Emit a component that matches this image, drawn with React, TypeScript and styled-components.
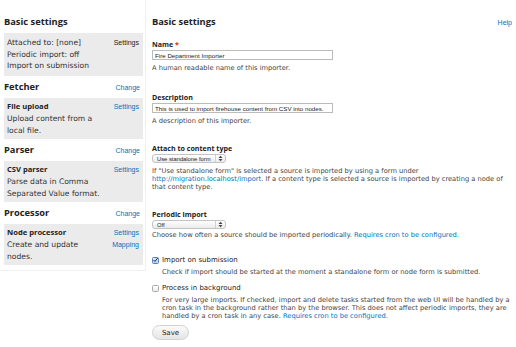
import React from "react";
import styled, { createGlobalStyle } from "styled-components";

const Global = createGlobalStyle`
  html, body { margin: 0; padding: 0; background: #fff; }
  body { font-family: "DejaVu Sans", Verdana, sans-serif; color: #333; }
  * { box-sizing: border-box; }
`;

const Page = styled.div`
  display: flex;
  width: 516px;
  height: 347px;
  overflow: hidden;
`;

const Sidebar = styled.div`
  width: 146px;
  flex: none;
  align-self: flex-start;
  padding: 11px 2px 5px 4px;
  border-right: 1px solid #f0f0f0;
  border-bottom: 1px solid #f0f0f0;
`;

const SideHead = styled.div`
  display: flex;
  justify-content: space-between;
  align-items: center;
  height: 22px;
  padding-right: 3px;
`;

const Title = styled.h2`
  margin: 0;
  font-family: "Open Sans", "DejaVu Sans", sans-serif;
  font-size: 9.3px;
  line-height: 12px;
  font-weight: bold;
  color: #222;
`;

const Link = styled.a`
  color: #0074bd;
  text-decoration: none;
  font-family: "Liberation Sans", Arial, sans-serif;
  font-size: 7px;
`;

const Box = styled.div<{ pad?: number }>`
  background: #ebebeb;
  display: flex;
  justify-content: space-between;
  padding: ${(p) => p.pad ?? 3}px 4px ${(p) => p.pad ?? 3}px 3px;
`;

const BoxText = styled.div`
  font-size: 7.6px;
  line-height: 11.7px;
  color: #333;
  white-space: nowrap;
`;

const BoxTitle = styled.div`
  font-family: "Open Sans", "DejaVu Sans", sans-serif;
  font-weight: bold;
  font-size: 7.6px;
  color: #222;
`;

const BoxLinks = styled.div`
  display: flex;
  flex-direction: column;
  align-items: flex-end;
  line-height: 11.7px;
`;

const PlainAction = styled.span`
  font-family: "Liberation Sans", Arial, sans-serif;
  font-size: 7px;
  color: #222;
`;

const Main = styled.div`
  flex: 1;
  padding: 12px 4px 0 6px;
`;

const MainHead = styled.div`
  display: flex;
  justify-content: space-between;
  align-items: center;
  height: 20px;
`;

const Field = styled.div<{ gap: number }>`
  margin-top: ${(p) => p.gap}px;
`;

const Label = styled.label`
  display: block;
  font-family: "Open Sans", "DejaVu Sans", sans-serif;
  font-size: 7.1px;
  line-height: 8px;
  font-weight: bold;
  color: #222;
  margin-bottom: 2px;
`;

const Req = styled.span`
  color: #e32700;
`;

const TextInput = styled.input`
  display: block;
  width: 181px;
  height: 10px;
  padding: 0 2px;
  margin: 0;
  border: 1px solid #bcbcbc;
  font-family: "Liberation Sans", Arial, sans-serif;
  font-size: 6.2px;
  color: #222;
  outline: none;
`;

const Select = styled.div`
  display: flex;
  align-items: center;
  justify-content: space-between;
  width: 74px;
  height: 9px;
  margin-top: 1px;
  border: 1px solid #c4c4c4;
  border-radius: 3px;
  padding: 0 0 0 4px;
  font-family: "Liberation Sans", Arial, sans-serif;
  font-size: 5.8px;
  color: #222;
  background: linear-gradient(#ffffff, #ebebeb);
`;

const SelArrows = styled.span`
  display: flex;
  align-items: center;
  justify-content: center;
  width: 10px;
  height: 100%;
  border-left: 1px solid #d0d0d0;
`;

const Desc = styled.div<{ mt?: number }>`
  font-size: 6.7px;
  line-height: 8px;
  color: #444;
  margin-top: ${(p) => p.mt ?? 4}px;
  white-space: nowrap;
`;

const InlineLink = styled.a`
  color: #0074bd;
  text-decoration: none;
`;

const CheckRow = styled.label`
  display: flex;
  align-items: center;
  gap: 3px;
  height: 8px;
  font-size: 7px;
  color: #222;
`;

const Check = styled.span<{ on?: boolean }>`
  width: 7px;
  height: 7px;
  flex: none;
  border: 1px solid ${(p) => (p.on ? "#5b7fb4" : "#a8a8a8")};
  border-radius: 1.5px;
  background: ${(p) => (p.on ? "linear-gradient(#e4eefa, #b9cde9)" : "linear-gradient(#fff, #ececec)")};
  display: flex;
  align-items: center;
  justify-content: center;
`;

const Indented = styled.div`
  padding-left: 10px;
`;

const SaveButton = styled.button`
  display: flex;
  align-items: center;
  justify-content: center;
  margin-top: 5px;
  width: 37px;
  height: 15px;
  border: 1px solid #d2d2d2;
  border-radius: 8px;
  background: linear-gradient(#fbfbfb, #e4e4e4);
  font-family: "DejaVu Sans", Verdana, sans-serif;
  font-size: 7px;
  color: #222;
  padding: 0;
`;

const Arrows = () => (
  <SelArrows>
    <svg width="5" height="7" viewBox="0 0 5 7">
      <path d="M0.5 3 L2.5 0.8 L4.5 3 Z" fill="#444" />
      <path d="M0.5 4 L2.5 6.2 L4.5 4 Z" fill="#444" />
    </svg>
  </SelArrows>
);

export default function App() {
  return (
    <>
      <Global />
      <Page>
        <Sidebar>
          <SideHead>
            <Title>Basic settings</Title>
          </SideHead>
          <Box pad={4}>
            <BoxText>
              Attached to: [none]
              <br />
              Periodic import: off
              <br />
              Import on submission
            </BoxText>
            <BoxLinks>
              <PlainAction>Settings</PlainAction>
            </BoxLinks>
          </Box>
          <SideHead>
            <Title>Fetcher</Title>
            <Link>Change</Link>
          </SideHead>
          <Box>
            <BoxText>
              <BoxTitle>File upload</BoxTitle>
              Upload content from a
              <br />
              local file.
            </BoxText>
            <BoxLinks>
              <Link>Settings</Link>
            </BoxLinks>
          </Box>
          <SideHead>
            <Title>Parser</Title>
            <Link>Change</Link>
          </SideHead>
          <Box>
            <BoxText>
              <BoxTitle>CSV parser</BoxTitle>
              Parse data in Comma
              <br />
              Separated Value format.
            </BoxText>
            <BoxLinks>
              <Link>Settings</Link>
            </BoxLinks>
          </Box>
          <SideHead>
            <Title>Processor</Title>
            <Link>Change</Link>
          </SideHead>
          <Box>
            <BoxText>
              <BoxTitle>Node processor</BoxTitle>
              Create and update
              <br />
              nodes.
            </BoxText>
            <BoxLinks>
              <Link>Settings</Link>
              <Link>Mapping</Link>
            </BoxLinks>
          </Box>
        </Sidebar>
        <Main>
          <MainHead>
            <Title>Basic settings</Title>
            <Link>Help</Link>
          </MainHead>
          <Field gap={8}>
            <Label>
              Name <Req>*</Req>
            </Label>
            <TextInput defaultValue="Fire Department Importer" />
            <Desc>A human readable name of this importer.</Desc>
          </Field>
          <Field gap={21}>
            <Label>Description</Label>
            <TextInput defaultValue="This is used to import firehouse content from CSV into nodes." />
            <Desc>A description of this importer.</Desc>
          </Field>
          <Field gap={19}>
            <Label>Attach to content type</Label>
            <Select>
              Use standalone form
              <Arrows />
            </Select>
            <Desc>
              If "Use standalone form" is selected a source is imported by using a form under
              <br />
              <InlineLink>http://migration.localhost/import</InlineLink>. If a content type is
              selected a source is imported by creating a node of
              <br />
              that content type.
            </Desc>
          </Field>
          <Field gap={19}>
            <Label>Periodic import</Label>
            <Select>
              Off
              <Arrows />
            </Select>
            <Desc mt={2}>
              Choose how often a source should be imported periodically.{" "}
              <InlineLink>Requires cron to be configured.</InlineLink>
            </Desc>
          </Field>
          <Field gap={17}>
            <CheckRow>
              <Check on>
                <svg width="6" height="6" viewBox="0 0 6 6">
                  <path d="M0.8 3 L2.4 4.7 L5.6 0.6" stroke="#1b2f55" strokeWidth="1.2" fill="none" />
                </svg>
              </Check>
              Import on submission
            </CheckRow>
            <Indented>
              <Desc>
                Check if import should be started at the moment a standalone form or node form is
                submitted.
              </Desc>
            </Indented>
          </Field>
          <Field gap={8}>
            <CheckRow>
              <Check />
              Process in background
            </CheckRow>
            <Indented>
              <Desc>
                For very large imports. If checked, import and delete tasks started from the web UI
                will be handled by a
                <br />
                cron task in the background rather than by the browser. This does not affect
                periodic imports, they are
                <br />
                handled by a cron task in any case.{" "}
                <InlineLink>Requires cron to be configured.</InlineLink>
              </Desc>
            </Indented>
          </Field>
          <SaveButton>Save</SaveButton>
        </Main>
      </Page>
    </>
  );
}
